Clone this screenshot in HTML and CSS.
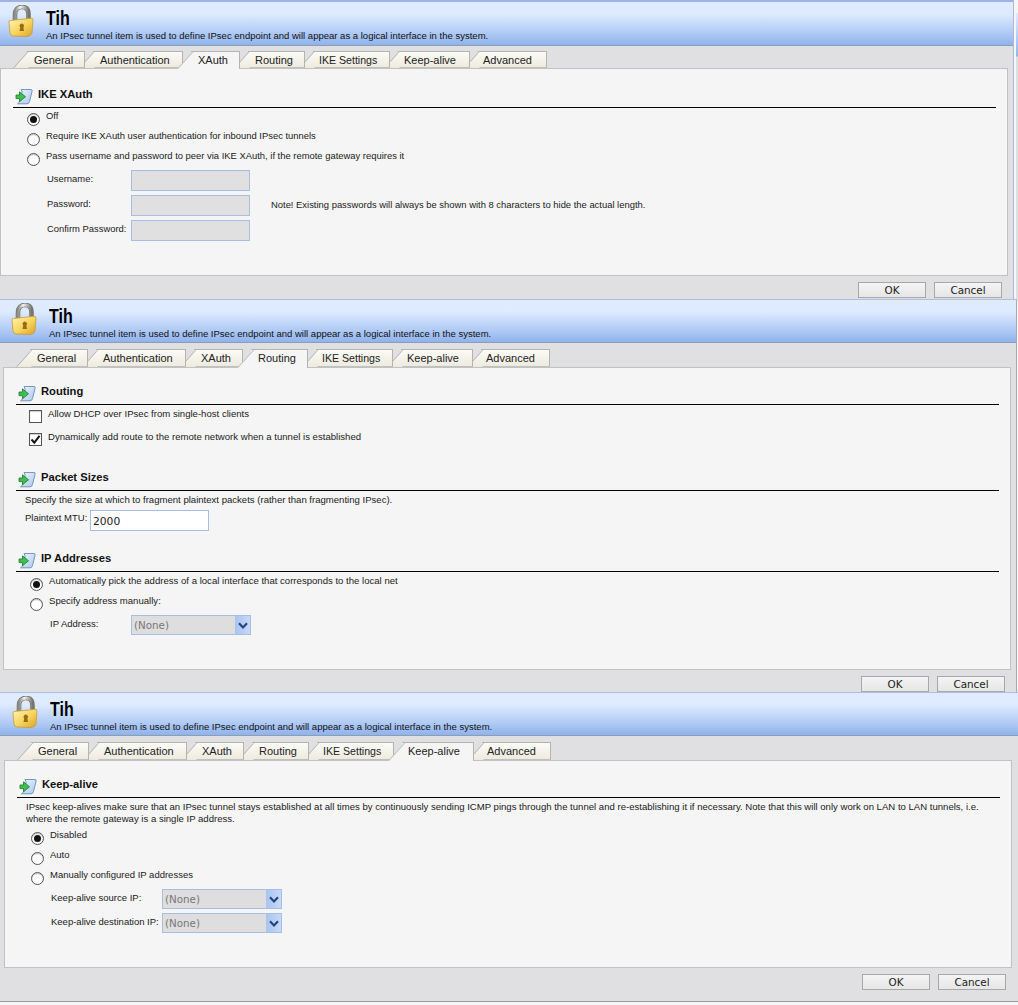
FILE: index.html
```html
<!DOCTYPE html>
<html lang="en">
<head>
<meta charset="utf-8">
<title>IPsec tunnel</title>
<link rel="stylesheet" href="styles.css">
</head>
<body>
<svg class="defs" width="0" height="0" aria-hidden="true">
  <defs>
    <linearGradient id="lockBody" x1="0" y1="0" x2="1" y2="1">
      <stop offset="0" stop-color="#fff6b4"/>
      <stop offset=".55" stop-color="#f6d35c"/>
      <stop offset="1" stop-color="#d9a227"/>
    </linearGradient>
    <linearGradient id="shackle" x1="0" y1="0" x2="1" y2="0">
      <stop offset="0" stop-color="#8c8c86"/>
      <stop offset=".4" stop-color="#f2f2ee"/>
      <stop offset="1" stop-color="#77776f"/>
    </linearGradient>
    <linearGradient id="docFill" x1="0" y1="0" x2="1" y2="1">
      <stop offset="0" stop-color="#f2f7ff"/>
      <stop offset="1" stop-color="#a7c6ee"/>
    </linearGradient>
    <symbol id="lock" viewBox="0 0 26 32">
      <path d="M7 15V9.5C7 5 9.5 2 14 2S20.5 5 20.5 9.5V14" fill="none" stroke="#77776f" stroke-width="4.6"/>
      <path d="M7 15V9.5C7 5 9.5 2 14 2S20.5 5 20.5 9.5V14" fill="none" stroke="url(#shackle)" stroke-width="3"/>
      <path d="M2.5 15.5Q1 15 1 17L2 28Q2.3 30.5 5 31L19 31.5Q23 31 24 28L25 15Q25 13 23 13.3Z" fill="url(#lockBody)" stroke="#c99a2e" stroke-width=".8"/>
      <path d="M11.5 26l.7-3.6a2.2 2.2 0 1 1 3.2 0l.6 3.6z" fill="#9a6a14"/>
    </symbol>
    <symbol id="doc" viewBox="0 0 18 17">
      <path d="M7 1.5H16Q17.6 1.5 17 3.5L14.5 13.5Q14 15.8 12 15.8H2.5Q5 14.5 5.6 11L7 5Q7.2 3 6 1.5Z" fill="url(#docFill)" stroke="#6a8cb6" stroke-width=".9"/>
      <path d="M1 7H4.5V3.8L10.5 8.8 4.5 13.8V10.6H1Z" fill="#3fbf4f" stroke="#1c7a2a" stroke-width=".8"/>
    </symbol>
    <symbol id="chev" viewBox="0 0 10 7">
      <path d="M1 1.2 5 5.4 9 1.2" fill="none" stroke="#23447c" stroke-width="2.2"/>
    </symbol>
  </defs>
</svg>

<div class="sliver"></div>

<section class="window w1">
  <header class="head">
    <svg class="lock"><use href="#lock"/></svg>
    <div class="head-text">
      <h1 class="title">Tih</h1>
      <p class="desc">An IPsec tunnel item is used to define IPsec endpoint and will appear as a logical interface in the system.</p>
    </div>
  </header>
  <nav class="tabs">
    <span class="tab">General</span><span class="tab">Authentication</span><span class="tab active">XAuth</span><span class="tab">Routing</span><span class="tab">IKE Settings</span><span class="tab">Keep-alive</span><span class="tab">Advanced</span>
  </nav>
  <main class="panel p-xauth">
    <h2 class="sec"><svg class="sec-icon"><use href="#doc"/></svg>IKE XAuth</h2>
    <div class="sec-body">
      <div class="opt"><span class="radio on"></span><span>Off</span></div>
      <div class="opt"><span class="radio"></span><span>Require IKE XAuth user authentication for inbound IPsec tunnels</span></div>
      <div class="opt"><span class="radio"></span><span>Pass username and password to peer via IKE XAuth, if the remote gateway requires it</span></div>
      <div class="fields f-xauth">
        <div class="field"><label class="flabel">Username:</label><span class="input off"></span></div>
        <div class="field"><label class="flabel">Password:</label><span class="input off"></span><span class="note">Note! Existing passwords will always be shown with 8 characters to hide the actual length.</span></div>
        <div class="field"><label class="flabel">Confirm Password:</label><span class="input off"></span></div>
      </div>
    </div>
  </main>
  <footer class="foot"><button class="btn">OK</button><button class="btn">Cancel</button></footer>
</section>

<section class="window w2">
  <header class="head">
    <svg class="lock"><use href="#lock"/></svg>
    <div class="head-text">
      <h1 class="title">Tih</h1>
      <p class="desc">An IPsec tunnel item is used to define IPsec endpoint and will appear as a logical interface in the system.</p>
    </div>
  </header>
  <nav class="tabs">
    <span class="tab">General</span><span class="tab">Authentication</span><span class="tab">XAuth</span><span class="tab active">Routing</span><span class="tab">IKE Settings</span><span class="tab">Keep-alive</span><span class="tab">Advanced</span>
  </nav>
  <main class="panel p-routing">
    <h2 class="sec"><svg class="sec-icon"><use href="#doc"/></svg>Routing</h2>
    <div class="sec-body">
      <div class="opt tall"><span class="check"></span><span>Allow DHCP over IPsec from single-host clients</span></div>
      <div class="opt tall"><span class="check on"><svg viewBox="0 0 11 11"><path d="M1.5 5.5 4.3 8.6 9.5 1.8" fill="none" stroke="#111" stroke-width="2"/></svg></span><span>Dynamically add route to the remote network when a tunnel is established</span></div>
    </div>
    <h2 class="sec sec-packet"><svg class="sec-icon"><use href="#doc"/></svg>Packet Sizes</h2>
    <div class="sec-body">
      <p class="para">Specify the size at which to fragment plaintext packets (rather than fragmenting IPsec).</p>
      <div class="field mtu"><label class="flabel">Plaintext MTU:</label><span class="input">2000</span></div>
    </div>
    <h2 class="sec sec-ip"><svg class="sec-icon"><use href="#doc"/></svg>IP Addresses</h2>
    <div class="sec-body">
      <div class="opt"><span class="radio on"></span><span>Automatically pick the address of a local interface that corresponds to the local net</span></div>
      <div class="opt"><span class="radio"></span><span>Specify address manually:</span></div>
      <div class="fields f-ip">
        <div class="field"><label class="flabel">IP Address:</label><span class="select"><span class="sel-val">(None)</span><span class="sel-arrow"><svg viewBox="0 0 10 7"><use href="#chev"/></svg></span></span></div>
      </div>
    </div>
  </main>
  <footer class="foot"><button class="btn">OK</button><button class="btn">Cancel</button></footer>
</section>

<section class="window w3">
  <header class="head">
    <svg class="lock"><use href="#lock"/></svg>
    <div class="head-text">
      <h1 class="title">Tih</h1>
      <p class="desc">An IPsec tunnel item is used to define IPsec endpoint and will appear as a logical interface in the system.</p>
    </div>
  </header>
  <nav class="tabs">
    <span class="tab">General</span><span class="tab">Authentication</span><span class="tab">XAuth</span><span class="tab">Routing</span><span class="tab">IKE Settings</span><span class="tab active">Keep-alive</span><span class="tab">Advanced</span>
  </nav>
  <main class="panel p-keep">
    <h2 class="sec"><svg class="sec-icon"><use href="#doc"/></svg>Keep-alive</h2>
    <div class="sec-body">
      <p class="para para-2">IPsec keep-alives make sure that an IPsec tunnel stays established at all times by continuously sending ICMP pings through the tunnel and re-establishing it if necessary. Note that this will only work on LAN to LAN tunnels, i.e.<br>where the remote gateway is a single IP address.</p>
      <div class="opt"><span class="radio on"></span><span>Disabled</span></div>
      <div class="opt"><span class="radio"></span><span>Auto</span></div>
      <div class="opt"><span class="radio"></span><span>Manually configured IP addresses</span></div>
      <div class="fields f-keep">
        <div class="field"><label class="flabel">Keep-alive source IP:</label><span class="select"><span class="sel-val">(None)</span><span class="sel-arrow"><svg viewBox="0 0 10 7"><use href="#chev"/></svg></span></span></div>
        <div class="field"><label class="flabel">Keep-alive destination IP:</label><span class="select"><span class="sel-val">(None)</span><span class="sel-arrow"><svg viewBox="0 0 10 7"><use href="#chev"/></svg></span></span></div>
      </div>
    </div>
  </main>
  <footer class="foot"><button class="btn">OK</button><button class="btn">Cancel</button></footer>
</section>
</body>
</html>
```
FILE: styles.css
```css
* { box-sizing: border-box; }
html, body { margin: 0; padding: 0; }
body {
  position: relative;
  width: 1018px;
  height: 1005px;
  overflow: hidden;
  background: #f6f6f6;
  font-family: "Liberation Sans", Arial, sans-serif;
  font-size: 9.5px;
  color: #1a1a1a;
}
.defs { position: absolute; }
.sliver {
  position: absolute;
  left: 1016px;
  top: 13px;
  width: 2px;
  height: 286px;
  background: linear-gradient(#e0ebff 0, #90b5ee 43px, #dfdee1 44px);
}

/* windows */
.window {
  display: flex;
  flex-direction: column;
  overflow: hidden;
  background: #e0dfe2;
  position: relative;
}
.w1 { width: 1014px; height: 299px; border-top: 2px solid #9db4e2; border-right: 1px solid #a9bbd4; --ox: 0px; }
.w2 { width: 1017px; height: 393px; border-right: 1px solid #a9a9ad; --ox: 3px; }
.w3 { width: 1018px; height: 310px; border-bottom: 1px solid #9a9a9a; --ox: 4px; }

/* header */
.head {
  flex: none;
  height: 44px;
  display: flex;
  gap: 12px;
  padding: 3px 0 0 calc(var(--ox) + 8px);
  background: linear-gradient(#e0ebff 0, #deeaff 28%, #b4cdf6 68%, #8fb3ec 100%);
  border-top: 1px solid #a8c0e4;
  border-bottom: 1px solid #8e9db4;
}
.w1 .head { border-top: 0; padding-top: 3px; }
.lock { width: 26px; height: 32px; flex: none; }
.head-text { padding-top: 1px; }
.title {
  margin: 0;
  font-size: 20px;
  line-height: 24px;
  font-weight: bold;
  color: #000;
  width: 30px;
  transform: scaleX(.8);
  transform-origin: left;
}
.desc { margin: 0; font-size: 9.53px; line-height: 12px; color: #111; }

/* tabs */
.tabs {
  flex: none;
  display: flex;
  height: 18px;
  margin-top: 6px;
  padding-left: calc(var(--ox) + 27px);
  position: relative;
  z-index: 1;
}
.w1 .tabs { height: 17px; margin-top: 5px; }
.tab {
  position: relative;
  display: block;
  flex: none;
  margin-left: 8px;
  height: 18px;
  padding: 0 0 0 7px;
  font-size: 11px;
  line-height: 17px;
  color: #222;
  white-space: nowrap;
  background: linear-gradient(#fbfbf7, #eeeade);
  border-top: 1px solid #b4b4ae;
  border-right: 1px solid #b4b4ae;
  border-bottom: 1px solid #c0c0c0;
}
.w1 .tab { height: 17px; line-height: 16px; }
.tab:first-child { margin-left: 0; z-index: 7; width: 58px; }
.tab:nth-child(2) { z-index: 6; width: 90px; }
.tab:nth-child(3) { z-index: 5; width: 49px; }
.tab:nth-child(4) { z-index: 4; width: 57px; }
.tab:nth-child(5) { z-index: 3; width: 77px; padding-left: 6px; font-size: 10.6px; }
.tab:nth-child(6) { z-index: 2; width: 72px; padding-left: 6px; }
.tab:nth-child(7) { z-index: 1; width: 69px; padding-left: 5px; }
.tab::before {
  content: "";
  position: absolute;
  left: -14px;
  top: -1px;
  bottom: -1px;
  width: 14px;
  z-index: -1;
  background: linear-gradient(#fbfbf7, #eeeade);
  border-left: 1px solid #b4b4ae;
  border-top: 1px solid #b4b4ae;
  transform: skewX(-42deg);
  transform-origin: 0 100%;
}
.tab.active {
  z-index: 9;
  background: #f5f5f5;
  height: 19px;
  border-bottom: 0;
}
.w1 .tab.active { height: 18px; }
.tab.active::before { background: #f5f5f5; bottom: 0; }

/* panel */
.panel {
  flex: none;
  margin-left: var(--ox);
  width: 1008px;
  background: #f5f5f5;
  border: 1px solid #c2c2c2;
  padding: 16px 11px 0 12px;
}
.p-xauth { height: 208px; padding-top: 18px; font-size: 9.42px; }
.p-routing { height: 303px; }
.p-keep { height: 208px; }

.sec {
  display: flex;
  margin: 0;
  height: 21px;
  padding-left: 25px;
  position: relative;
  font-size: 11.2px;
  line-height: 14px;
  font-weight: bold;
  color: #111;
  border-bottom: 1px solid #000;
}
.sec-icon { position: absolute; left: 2px; top: 1px; width: 18px; height: 17px; }
.sec-packet { margin-top: 18px; }
.sec-ip { margin-top: 20px; }
.sec-body { padding-top: 1px; }

.opt {
  display: flex;
  height: 20px;
  line-height: 14px;
  padding-left: 14px;
  gap: 6px;
}
.p-routing .opt { padding-top: 1px; font-size: 9.58px; }
.opt.tall { height: 23px; padding-left: 13px; }
.radio {
  flex: none;
  width: 13px;
  height: 13px;
  margin-top: 4px;
  border-radius: 50%;
  border: 1px solid #555;
  background: #fff;
  position: relative;
  box-shadow: inset 0 1px 1px #bbb;
}
.radio.on::after {
  content: "";
  position: absolute;
  left: 2px;
  top: 2px;
  width: 7px;
  height: 7px;
  border-radius: 50%;
  background: #111;
}
.check {
  flex: none;
  width: 13px;
  height: 13px;
  margin-top: 3px;
  border: 1px solid #555;
  background: #fff;
  box-shadow: inset 0 1px 1px #ccc;
  display: block;
}
.check svg { display: block; width: 11px; height: 11px; }

.para { margin: 0; line-height: 14px; padding: 1px 0 0 9px; font-size: 9.57px; }
.para-2 { line-height: 12px; padding-top: 2px; margin-bottom: 3px; }

.fields { display: flex; flex-direction: column; margin-top: 2px; }
.f-xauth { gap: 4px; padding-left: 34px; margin-top: 1px; }
.f-xauth .flabel { width: 84px; padding-top: 2px; }
.f-xauth .note { padding-top: 3px; }
.f-ip { padding-left: 34px; }
.f-ip .flabel { width: 81px; padding-top: 2px; }
.f-keep { gap: 4px; padding-left: 34px; margin-top: 1px; }
.f-keep .flabel { width: 111px; padding-top: 2px; }

.field { display: flex; align-items: flex-start; }
.flabel { flex: none; line-height: 14px; padding-top: 1px; }
.mtu { margin-top: 3px; padding-left: 9px; }
.mtu .flabel { width: 65px; padding-top: 1px; }

.input {
  flex: none;
  display: block;
  width: 119px;
  height: 21px;
  padding: 3px 0 0 2px;
  font-family: "DejaVu Sans", sans-serif;
  font-size: 10.7px;
  line-height: 15px;
  background: #fff;
  border: 1px solid #a4bfe2;
}
.input.off { background: #e0e0e0; }
.note { margin-left: 21px; line-height: 14px; }

.select {
  flex: none;
  display: flex;
  width: 120px;
  height: 20px;
  background: #dedede;
  border: 1px solid #a4bfe2;
}
.sel-val {
  flex: 1;
  padding: 3px 0 0 2px;
  font-family: "DejaVu Sans", sans-serif;
  font-size: 10.3px;
  line-height: 13px;
  color: #777;
}
.sel-arrow {
  flex: none;
  width: 15px;
  display: flex;
  align-items: center;
  justify-content: center;
  background: linear-gradient(90deg, #a9c4ee, #c6d9f8);
}
.sel-arrow svg { width: 10px; height: 7px; }

/* footer */
.foot {
  flex: none;
  display: flex;
  gap: 8px;
  justify-content: flex-end;
  margin-top: 6px;
  margin-left: var(--ox);
  width: 1002px;
}
.btn {
  width: 68px;
  height: 16px;
  padding: 0;
  font-family: "DejaVu Sans", sans-serif;
  font-size: 10.4px;
  line-height: 14px;
  color: #222;
  border: 1px solid #a8a8a8;
  background: linear-gradient(#f4f4f4, #e6e6e6);
}
```
